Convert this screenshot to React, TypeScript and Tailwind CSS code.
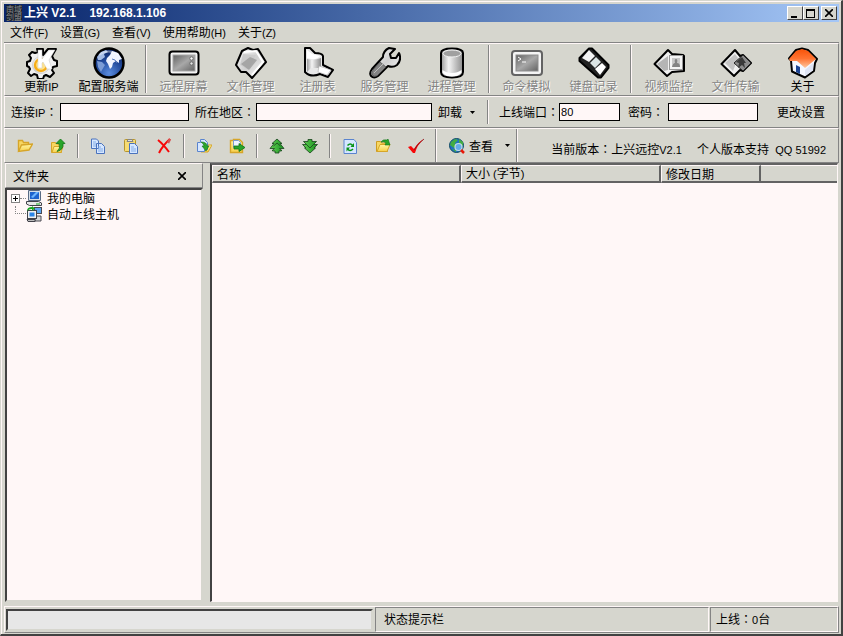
import type { ReactNode } from "react";

const outline = { stroke: "#000", strokeWidth: 2, strokeLinejoin: "round" as const };

/* ---------- large toolbar icons (32 x 32) ---------- */

const Defs = () => (
  <svg width="0" height="0" className="absolute" aria-hidden="true">
    <defs>
      <linearGradient id="silver" x1="0" y1="0" x2="1" y2="1">
        <stop offset="0" stopColor="#fff" />
        <stop offset="0.5" stopColor="#d0d0d0" />
        <stop offset="1" stopColor="#fff" />
      </linearGradient>
      <linearGradient id="screen" x1="0" y1="0" x2="1" y2="1">
        <stop offset="0" stopColor="#636363" />
        <stop offset="0.5" stopColor="#a8a8a8" />
        <stop offset="1" stopColor="#636363" />
      </linearGradient>
      <linearGradient id="tube" x1="0" y1="0" x2="1" y2="0">
        <stop offset="0" stopColor="#9c9c9c" />
        <stop offset="0.35" stopColor="#f4f4f4" />
        <stop offset="1" stopColor="#8c8c8c" />
      </linearGradient>
      <radialGradient id="ocean" cx="0.5" cy="0.85" r="0.75">
        <stop offset="0" stopColor="#5a8cde" />
        <stop offset="0.6" stopColor="#214a9c" />
        <stop offset="1" stopColor="#102a6b" />
      </radialGradient>
      <linearGradient id="roof" x1="0" y1="0" x2="0" y2="1">
        <stop offset="0" stopColor="#f75208" />
        <stop offset="0.5" stopColor="#ff7331" />
        <stop offset="1" stopColor="#ffc8a0" />
      </linearGradient>
      <linearGradient id="folder" x1="0" y1="0" x2="0" y2="1">
        <stop offset="0" stopColor="#fff7a5" />
        <stop offset="1" stopColor="#f7cf4a" />
      </linearGradient>
      <linearGradient id="leaf" x1="0" y1="0" x2="1" y2="0">
        <stop offset="0" stopColor="#63ce52" />
        <stop offset="1" stopColor="#189421" />
      </linearGradient>
    </defs>
  </svg>
);

const Icon32 = ({ children }: { children: ReactNode }) => (
  <svg width="32" height="32" viewBox="0 0 32 32" fill="none" aria-hidden="true">
    {children}
  </svg>
);

const GearIcon = () => (
  <Icon32>
    <path
      d="M11 2h6v6l5-6h8l-4 7 2 4 3 1v5l-4 1-1 3 2 3-4 4-4-2-2 1-1 3h-5l-1-4-3-1-3 2-3-3 2-4-1-2-2-1v-4l3-1 1-3-2-3 3-3 3 1 3-1z"
      fill="#f0f0f0"
      {...outline}
    />
    <circle cx="15" cy="18" r="8.500" fill="url(#silver)" stroke="#c0c0c0" strokeWidth="0.600" />
    <circle cx="15" cy="18" r="6" fill="#ffe38c" stroke="#f7ad18" strokeWidth="2.400" />
    <path d="M12 3h4v9l7-9h6l-6 10 3 9h-5l-4-7-1 1v5h-4z" fill="#fff" stroke="#c8c8c8" strokeWidth="0.500" />
  </Icon32>
);

const GlobeIcon = () => (
  <Icon32>
    <circle cx="16" cy="16" r="14.500" fill="url(#ocean)" {...outline} strokeWidth={2.5} />
    <path d="M4 10l4-5 5-2 2 2-4 2 1 3-4 3-3 0z" fill="#a5bde7" />
    <path d="M4 14l5 1 3 3-3 5-1 2-3-5z" fill="#7b9cd6" />
    <path d="M14 11l3-3 2-4 6 2 4 6-3 1 0 3-3-2-3 2-1 4-2 2-2-5-2-3z" fill="#f0f4ff" />
    <path d="M19 12l3 1 2 3" stroke="#5a7bbd" />
    <path d="M6 8q9-7 20 0" stroke="#fff" strokeOpacity="0.4" strokeWidth="2" />
  </Icon32>
);

const ScreenIcon = () => (
  <Icon32>
    <rect x="1.500" y="4.500" width="29" height="23" rx="3" fill="#f4f4f4" {...outline} />
    <rect x="5" y="8" width="22" height="16" fill="url(#screen)" stroke="#a5a5a5" />
    <circle cx="23.500" cy="11.500" r="1.700" fill="#fff" stroke="#666" />
    <circle cx="23.500" cy="16.500" r="1.700" fill="#e4e4e4" stroke="#666" />
  </Icon32>
);

const PapersIcon = () => (
  <Icon32>
    <path d="M7 4l6-3 5 2 5-1 8 13-14 16-6-6-5 0-5-7z" fill="url(#silver)" {...outline} />
    <path d="M8 7l13 1-8 15-8-5z" fill="#ccc" />
    <path d="M6 17l9-7 7 3-8 10z" fill="#949494" fillOpacity="0.7" />
    <path d="M9 5l12-1 7 11-11 13" stroke="#fff" strokeWidth="2" />
  </Icon32>
);

const RegistryIcon = () => (
  <Icon32>
    <path d="M3 1h5l5 5q7 0 8 3v9l10 5-5 7-8-3q-9 4-15-2z" fill="#e8e8e8" {...outline} />
    <path d="M5 12q6 2 14-1v10H9l-4 4z" fill="url(#tube)" />
    <path d="M5 3l5 4 8 2q-4 5-13 2z" fill="#fff" />
    <path d="M17 19l12 4-4 5-9-3z" fill="#fff" stroke="#aaa" strokeWidth="0.600" />
  </Icon32>
);

const WrenchIcon = () => (
  <Icon32>
    <path
      d="M14 10q0-6 6-9l6 1-5 5 1 4 5 0 3-5q3 7-2 12-4 3-9 1L9 29q-4 3-7 0-2-3 1-7z"
      fill="url(#silver)"
      {...outline}
    />
    <path d="M11 15l6 5-9 9q-3 1-5-1-1-2 1-5z" fill="#848484" stroke="#333" strokeWidth="0.600" />
    <path d="M5 26l9-9" stroke="#bbb" />
  </Icon32>
);

const CylinderIcon = () => (
  <Icon32>
    <path d="M5 6q0-4.500 11-4.500t11 4.500v19q0 5.500-11 5.500T5 25z" fill="url(#tube)" {...outline} />
    <ellipse cx="16" cy="6.500" rx="9" ry="3.500" fill="#a0a0a0" stroke="#f0f0f0" />
    <path d="M6.500 23q4 3 9.500 3t9.500-3v3q-4 3.500-9.500 3.500T6.500 26z" fill="#fff" />
  </Icon32>
);

const TerminalIcon = () => (
  <Icon32>
    <rect x="1" y="4" width="30" height="24" rx="3" fill="#f4f4f4" stroke="#636363" strokeWidth="2" />
    <rect x="5" y="8" width="22" height="16" fill="url(#screen)" stroke="#8c8c8c" />
    <path d="M7 10l3 2-3 2M11 15h4" stroke="#fff" />
  </Icon32>
);

const FilmIcon = () => (
  <Icon32>
    <path d="M11 1.500h3L30.500 18v3L23 30.500h-3L1.500 14v-3z" fill="#222" {...outline} />
    <path d="M11 3l6 6-6 6-7-4z" fill="#f4f4f4" />
    <path d="M18 10l5 5-6 6-5-5z" fill="#dbe4e4" />
    <path d="M24 16l4 4-6 8-5-6z" fill="#fff" />
  </Icon32>
);

const VideoIcon = () => (
  <Icon32>
    <path d="M1.500 17L15 3l4 4 11 1 1 1v15l-12 1-5 4z" fill="#f0f0f0" {...outline} />
    <path d="M4 17l11-8v14l-4 1z" fill="#b5b5b5" />
    <rect x="16.500" y="8.500" width="13" height="14" fill="#f4f4f4" stroke="#999" />
    <rect x="19" y="11" width="8" height="9" fill="#c8c8c8" />
    <path d="M19 20q1-4 3-4-1-4 1-4t1 4q3 0 3 4z" fill="#848484" />
  </Icon32>
);

const TransferIcon = () => (
  <Icon32>
    <path d="M1.500 17L15 3l5 6 3-1 8 8-8 8-3-1-6 6z" fill="#f0f0f0" {...outline} />
    <path d="M5 16l10-9 3 4-5 13z" fill="#c4c4c4" />
    <path d="M14 16l9-8 8 8-8 8z" fill="#8c8c8c" stroke="#222" />
    <path d="M22 10l4 6h-2l1 5-3-3-4 3 1-5-3-1z" fill="#3a3a3a" />
  </Icon32>
);

const HouseIcon = () => (
  <Icon32>
    <path d="M9 3l6-1.500 6 1.500 9 9-2 4-1 8-9 6.500-13-6-1-11-2-2z" fill="#f4f7ff" {...outline} />
    <path d="M9 4l6-2 6 2 8 8-11 9-8-7-7 0-1-2z" fill="url(#roof)" />
    <path d="M9 18l4 2v7l-4-2z" fill="#1c4494" />
    <path d="M18 23l8-7v7l-8 6z" fill="#dee4f4" />
  </Icon32>
);

/* ---------- small toolbar icons (16 x 16) ---------- */

const Icon16 = ({ children }: { children: ReactNode }) => (
  <svg width="16" height="16" viewBox="0 0 16 16" fill="none" aria-hidden="true">
    {children}
  </svg>
);

const FolderShape = () => (
  <>
    <path d="M1.500 13.500v-10h4l1 1.500h6v8.500z" fill="#f7d763" stroke="#ce9c21" />
    <path d="M2 13.500l3-7h10l-3 7z" fill="url(#folder)" stroke="#d6a529" />
  </>
);

const FolderOpenIcon = () => (
  <Icon16>
    <path d="M1.500 13V2.500h4l1 2h5V7" fill="#f7d763" stroke="#d6a529" strokeWidth="1.400" />
    <path d="M1.500 13.500l3-6.500 11-1-3.500 6z" fill="url(#folder)" stroke="#d6a529" strokeWidth="1.400" />
  </Icon16>
);

const FolderUpIcon = () => (
  <Icon16>
    <path d="M1.500 14.500v-10h4l1 1.500h5v8.500z" fill="#f7d763" stroke="#d6a529" />
    <path d="M2 14.500l2-6h9l-2 6z" fill="url(#folder)" stroke="#d6a529" />
    <path d="M7 13.500q4-3 2-8H6L10.500 1 15 5.500h-2q1 6-6 8z" fill="#29a529" stroke="#107318" strokeWidth="0.800" />
  </Icon16>
);

const CopyIcon = () => (
  <Icon16>
    <path d="M1.500 1h5l2 2v7.500h-7zM6.500 5.500h5l3 3v7h-8z" fill="#d6e7ff" stroke="#4a73bd" />
    <path d="M3 4h3M3 6h3M3 8h3M8 9h3M8 11h5M8 13h5" stroke="#84ade7" />
  </Icon16>
);

const PasteIcon = () => (
  <Icon16>
    <rect x="1.500" y="1.500" width="11" height="12" rx="1" fill="#f7dc73" stroke="#b5942c" />
    <path d="M4 3.500l1-2h4l1 2z" fill="#e0e0e0" stroke="#848484" />
    <path d="M6.500 5.500h5l3 3v7h-8z" fill="#d6e7ff" stroke="#4a73bd" />
    <path d="M8 9h3M8 11h5M8 13h5" stroke="#84ade7" />
  </Icon16>
);

const DeleteIcon = () => (
  <Icon16>
    <path d="M2 2q5 4 11 12M14 1Q7 7 3 15" stroke="#f70808" strokeWidth="2" />
    <path d="M14 1l-2 4" stroke="#d65252" strokeWidth="2.500" />
  </Icon16>
);

const CopyToIcon = () => (
  <Icon16>
    <path d="M5 14l3-7h8l-4 7z" fill="url(#folder)" stroke="#d6a529" />
    <path d="M1.500 4.500h3v-3h4l3 3v7h-3v2h-7z" fill="#d6e7ff" stroke="#5a84ce" />
    <path d="M5 4q6 0 6 4h2l-3 5-4-5h2q0-2-3-4z" fill="#29a529" stroke="#107318" strokeWidth="0.600" />
  </Icon16>
);

const MoveToIcon = () => (
  <Icon16>
    <path d="M1.500 14.500v-12h3v-1h6l3 3v10z" fill="url(#folder)" stroke="#d6a529" strokeWidth="1.400" />
    <path d="M4.500 2.500h5l2 2v5h-7z" fill="#eef4ff" stroke="#7b9cce" />
    <path d="M5 8h5V5.500l6 4-6 4V11H5z" fill="#29a529" stroke="#107318" strokeWidth="0.800" />
  </Icon16>
);

const ExpandUpIcon = () => (
  <Icon16>
    <path
      d="M8 1l5 4.500h-2l4 5h-4.500l2 1.500v1h-2.500v2H6v-2H3.500v-1l2-1.500H1l4-5H3z"
      fill="url(#leaf)"
      stroke="#18421c"
      strokeWidth="0.800"
    />
    <path d="M4.500 8L8 5l3.500 3" stroke="#18421c" strokeWidth="0.800" />
  </Icon16>
);

const ExpandDownIcon = () => (
  <Icon16>
    <path
      d="M6 1.500h4v2h4.500l-3 3h4L12 10h1.500L8 15l-5.500-5H4L.5 6.500h4l-3-3H6z"
      fill="url(#leaf)"
      stroke="#18421c"
      strokeWidth="0.800"
    />
    <path d="M4.500 6.500L8 10l3.500-3.500" stroke="#18421c" strokeWidth="0.800" />
  </Icon16>
);

const RefreshIcon = () => (
  <Icon16>
    <path d="M2 1.500h10l2.500 3v11H2z" fill="#d6e7ff" stroke="#5a84ce" />
    <path d="M5.500 7.500q3-3 5 0M11 11q-3 3-5.500 0" stroke="#089418" strokeWidth="1.600" />
    <path d="M12 5v4H8.500zM4.500 9.500H8l-3.500 4z" fill="#089418" />
  </Icon16>
);

const FolderOutIcon = () => (
  <Icon16>
    <FolderShape />
    <path d="M6 4q2-3 6-2l1-1 2 6h-5l1-2q-2-2-5-1z" fill="#29a529" stroke="#107318" strokeWidth="0.600" />
  </Icon16>
);

const CheckIcon = () => (
  <Icon16>
    <path d="M0 9l3-1 3 3Q10 4 16 1 9 7 7 15H5z" fill="#f70808" />
    <path d="M6 12Q10 5 16 1" stroke="#841018" strokeWidth="0.800" />
  </Icon16>
);

const GlobeSearchIcon = () => (
  <Icon16>
    <circle cx="7.500" cy="7.500" r="7" fill="#2173bd" stroke="#104a63" />
    <path d="M2 4l4-3 3 1-3 3 1 4-2 1-4-3zM10 1l4 3v4l-4-2zM3 11l4 1v2z" fill="#42ad42" />
    <circle cx="9.500" cy="9" r="3.500" fill="#63ade7" stroke="#c6dbe7" strokeWidth="1.200" />
    <path d="M12 12l3 3" stroke="#e71808" strokeWidth="2.500" />
  </Icon16>
);

const AppIcon = () => (
  <svg
    width="16"
    height="16"
    viewBox="0 0 16 16"
    className="overflow-visible bg-[#18202c] font-['Noto_Sans_CJK_SC',sans-serif] text-[8px]"
    fill="#8c8c8c"
    aria-hidden="true"
  >
    <text x="0 8 0 8" y="7 7 15 15">南域剑盟</text>
  </svg>
);

const ComputerIcon = () => (
  <Icon16>
    <path d="M2.500 0.500h11l1 1v9h-12z" fill="#d6dee7" stroke="#5a6b84" />
    <rect x="4" y="2" width="9" height="7" fill="#1c63ce" />
    <path d="M5 7l5-5h3l-6 6z" fill="#6bb5ff" />
    <path d="M.5 11.500h12l3 1.500v2.500h-12l-3-1.500z" fill="#e7e7e7" stroke="#42424a" />
    <path d="M10 14h4" stroke="#18a521" />
  </Icon16>
);

const HostsIcon = () => (
  <Icon16>
    <rect x="8.500" y="1.500" width="7" height="6" fill="#5aa5ef" stroke="#4a4a52" />
    <path d="M9 10h6v5H9z" fill="#d6d6d6" stroke="#4a4a52" />
    <rect x="1.500" y="4.500" width="9" height="8" fill="#f0f0f0" stroke="#42424a" />
    <rect x="3.500" y="6.500" width="5" height="4" fill="#2984e7" />
    <path d="M1 13.500h8v2H2z" fill="#bdbdbd" stroke="#42424a" />
    <path d="M1 5q0-4 5-4V0l3 2.500L6 5V3Q3 3 1 5z" fill="#18a521" />
  </Icon16>
);

/* ---------- shared pieces ---------- */

const Colon = () => <span className="font-['Noto_Sans_CJK_TC',sans-serif]">：</span>;

const Latin = ({ children }: { children: ReactNode }) => (
  <span className="font-['Liberation_Sans',sans-serif] text-[11px] whitespace-pre">{children}</span>
);

const Caret = () => (
  <svg width="5" height="3" viewBox="0 0 5 3" aria-hidden="true">
    <path d="M0 0h5L2.500 3z" fill="#000" />
  </svg>
);

const BigSeparator = () => (
  <div className="flex w-2 justify-center py-px">
    <div className="w-[2px] border-l border-[#848484] bg-[#fff7f7]" />
  </div>
);

const SmallSeparator = () => (
  <div className="flex w-[7px] justify-center">
    <div className="h-6 w-[2px] border-l border-[#848484] bg-[#fff7f7]" />
  </div>
);

type Tool = { label: ReactNode; icon: ReactNode; disabled?: boolean };

const toolGroups: Tool[][] = [
  [
    { label: <>更新<Latin>IP</Latin></>, icon: <GearIcon /> },
    { label: "配置服务端", icon: <GlobeIcon /> },
  ],
  [
    { label: "远程屏幕", icon: <ScreenIcon />, disabled: true },
    { label: "文件管理", icon: <PapersIcon />, disabled: true },
    { label: "注册表", icon: <RegistryIcon />, disabled: true },
    { label: "服务管理", icon: <WrenchIcon />, disabled: true },
    { label: "进程管理", icon: <CylinderIcon />, disabled: true },
  ],
  [
    { label: "命令模拟", icon: <TerminalIcon />, disabled: true },
    { label: "键盘记录", icon: <FilmIcon />, disabled: true },
  ],
  [
    { label: "视频监控", icon: <VideoIcon />, disabled: true },
    { label: "文件传输", icon: <TransferIcon />, disabled: true },
    { label: "关于", icon: <HouseIcon /> },
  ],
];

const actionGroups = [
  [
    { name: "打开", icon: <FolderOpenIcon /> },
    { name: "向上", icon: <FolderUpIcon /> },
  ],
  [
    { name: "复制", icon: <CopyIcon /> },
    { name: "粘贴", icon: <PasteIcon /> },
    { name: "删除", icon: <DeleteIcon /> },
  ],
  [
    { name: "复制到", icon: <CopyToIcon /> },
    { name: "移动到", icon: <MoveToIcon /> },
  ],
  [
    { name: "上传", icon: <ExpandUpIcon /> },
    { name: "下载", icon: <ExpandDownIcon /> },
  ],
  [
    { name: "刷新", icon: <RefreshIcon /> },
    { name: "导出", icon: <FolderOutIcon /> },
    { name: "确定", icon: <CheckIcon /> },
  ],
];

const menus = [
  { name: "文件", hotkey: "(F)" },
  { name: "设置", hotkey: "(G)" },
  { name: "查看", hotkey: "(V)" },
  { name: "使用帮助", hotkey: "(H)" },
  { name: "关于", hotkey: "(Z)" },
];

const captionButton =
  "flex h-[14px] w-4 items-center justify-center border border-t-white border-l-white border-r-[#424242] border-b-[#424242] bg-[#d6d6ce]";
const field =
  "h-[18px] min-w-0 border border-black bg-[#fff7f7] px-px font-['Liberation_Sans',sans-serif] text-[11px] outline-none";
const band =
  "border-t border-r border-b border-l border-t-[#fff7f7] border-r-[#848484] border-b-[#848484] border-l-[#fff7f7]";

const TitleBar = () => (
  <header className="flex h-[18px] items-center bg-linear-to-r from-[#08246b] to-[#a5c7f7] pr-[2px] pl-[2px]">
    <AppIcon />
    <h1 className="flex-1 pl-[2px] font-['Liberation_Sans','Noto_Sans_CJK_SC',sans-serif] text-[12px] leading-[18px] font-bold whitespace-pre text-white">
      上兴 V2.1{"    "}192.168.1.106
    </h1>
    <button aria-label="最小化" className={captionButton}>
      <svg width="10" height="9" viewBox="0 0 10 9"><path d="M1 7h6v2H1z" /></svg>
    </button>
    <button aria-label="最大化" className={captionButton}>
      <svg width="10" height="9" viewBox="0 0 10 9"><path d="M0 0h9v9H0zM1 2v6h7V2z" fillRule="evenodd" /></svg>
    </button>
    <button aria-label="关闭" className={`${captionButton} ml-[2px]`}>
      <svg width="8" height="8" viewBox="0 0 8 8"><path d="M0 0l8 8M8 0L0 8" stroke="#000" strokeWidth="1.600" /></svg>
    </button>
  </header>
);

const MainToolbar = () => (
  <div className={`flex h-[53px] px-[3px] pb-px ${band}`}>
    {toolGroups.map((group, i) => (
      <div key={i} className="flex">
        {i > 0 && <BigSeparator />}
        {group.map((tool, j) => (
          <button
            key={j}
            disabled={tool.disabled}
            className="flex w-[67px] flex-col items-center pt-[3px] whitespace-nowrap disabled:text-[#848484] disabled:text-shadow-[1px_1px_0_#fff]"
          >
            {tool.icon}
            <span className="leading-[14px]">{tool.label}</span>
          </button>
        ))}
      </div>
    ))}
  </div>
);

const ConnectionBar = () => (
  <div className={`flex h-8 items-center pr-[13px] pl-[6px] whitespace-nowrap ${band}`}>
    <label htmlFor="ip" className="w-[49px]">连接<Latin>IP</Latin><Colon /></label>
    <input id="ip" className={`${field} w-[129px]`} />
    <label htmlFor="region" className="ml-[6px] w-[61px]">所在地区<Colon /></label>
    <input id="region" className={`${field} w-[176px]`} />
    <button className="ml-[6px] flex items-center gap-2">
      卸载
      <Caret />
    </button>
    <div className="ml-3 h-6 w-[2px] border-l border-[#848484] bg-[#fff7f7]" />
    <label htmlFor="port" className="ml-[10px] w-[60px]">上线端口<Colon /></label>
    <input id="port" defaultValue="80" className={`${field} w-[61px]`} />
    <label htmlFor="password" className="ml-2 w-10">密码<Colon /></label>
    <input id="password" type="password" className={`${field} w-[90px]`} />
    <button className="ml-auto">更改设置</button>
  </div>
);

const ActionBar = () => (
  <div className={`flex h-[35px] items-stretch whitespace-nowrap ${band}`}>
    <div className="flex items-center border-r border-[#848484] pr-[3px] pl-[3px]">
      {actionGroups.map((group, i) => (
        <div key={i} className="flex items-center">
          {i > 0 && <SmallSeparator />}
          {group.map((action) => (
            <button key={action.name} aria-label={action.name} className="flex w-[33px] justify-center">
              {action.icon}
            </button>
          ))}
        </div>
      ))}
    </div>
    <button className="flex items-center border-r border-l border-r-[#848484] border-l-[#fff7f7] pr-[6px] pl-3">
      <GlobeSearchIcon />
      <span className="pr-3 pl-1">查看</span>
      <Caret />
    </button>
    <p className="flex-1 border-l border-[#fff7f7] pt-[12px] pr-3 text-right">
      当前版本<Colon />上兴远控<Latin>{"V2.1     "}</Latin>个人版本支持<Latin>{"  QQ 51992"}</Latin>
    </p>
  </div>
);

const FolderPanel = () => (
  <aside className="flex w-[198px] shrink-0 flex-col">
    <div className="flex h-[25px] items-center justify-between border border-t-[#fff7f7] border-r-[#848484] border-b-[#848484] border-l-[#fff7f7] pr-4 pl-[7px]">
      <h2>文件夹</h2>
      <button aria-label="关闭">
        <svg width="8" height="8" viewBox="0 0 8 8"><path d="M0 0l8 8M8 0L0 8" stroke="#000" strokeWidth="1.600" /></svg>
      </button>
    </div>
    <ul className="flex-1 border-2 border-t-[#424242] border-r-[#d6d6ce] border-b-[#d6d6ce] border-l-[#424242] bg-[#fff7f7] pl-1">
      <li className="flex h-4 items-center">
        <button
          aria-label="展开"
          className="flex size-[9px] items-center justify-center border border-[#848484] bg-white"
        >
          <svg width="5" height="5" viewBox="0 0 5 5"><path d="M0 2.500h5M2.500 0v5" stroke="#000" /></svg>
        </button>
        <span className="w-[6px] border-t border-dotted border-[#848484]" />
        <ComputerIcon />
        <span className="pl-[5px]">我的电脑</span>
      </li>
      <li className="flex h-4 items-center">
        <span className="mb-2 ml-1 h-2 w-[11px] border-b border-l border-dotted border-[#848484]" />
        <HostsIcon />
        <span className="pl-[5px]">自动上线主机</span>
      </li>
    </ul>
  </aside>
);

const headCell =
  "border-t border-r-2 border-b-2 border-l border-t-[#fff7f7] border-r-[#636363] border-b-[#636363] border-l-[#fff7f7] p-0 pl-1 text-left leading-[13px] font-normal";

const FileList = () => (
  <section className="min-w-0 flex-1 border border-t-2 border-l-2 border-t-[#636363] border-r-[#fff7f7] border-b-[#fff7f7] border-l-[#424242] bg-[#fff7f7]">
    <table className="w-full table-fixed border-separate border-spacing-0 bg-[#d6d6ce]">
      <thead>
        <tr>
          <th className={`${headCell} w-[249px]`}>名称</th>
          <th className={`${headCell} w-[200px]`}>大小<Latin>{" ("}</Latin>字节<Latin>)</Latin></th>
          <th className={`${headCell} w-[100px]`}>修改日期</th>
          <td className="border-t border-b-2 border-t-[#fff7f7] border-b-[#636363]" />
        </tr>
      </thead>
    </table>
  </section>
);

const StatusBar = () => (
  <footer className="mt-1 flex h-[27px] border-t border-r border-b border-l border-t-[#fff7f7] border-r-[#848484] border-b-[#848484] border-l-[#fff7f7] leading-[22px]">
    <div className="mt-[2px] mr-[2px] ml-px h-[22px] w-[367px] shrink-0 border-2 border-t-[#424242] border-r-[#d6d6ce] border-b-[#d6d6ce] border-l-[#424242] bg-[#e7e7e7]" />
    <p className="mr-px flex-1 border-t border-r border-b border-l border-t-[#848484] border-r-[#fff7f7] border-b-[#fff7f7] border-l-[#848484] pl-2">
      状态提示栏
    </p>
    <p className="w-[128px] border-t border-r border-b border-l border-t-[#848484] border-r-[#fff7f7] border-b-[#fff7f7] border-l-[#848484] pl-[5px]">
      上线<Colon /><Latin>0</Latin>台
    </p>
  </footer>
);

const App = () => (
  <div className="border-t border-r-2 border-b-2 border-l border-t-[#d6d6ce] border-r-[#424242] border-b-[#424242] border-l-[#d6d6ce] bg-[#d6d6ce] font-['Noto_Sans_CJK_SC',sans-serif] text-[12px] leading-4 text-black">
    <Defs />
    <div className="flex min-h-[calc(100vh-3px)] flex-col border-t border-l border-[#fff7f7] pt-[2px] pr-[2px] pb-px pl-[2px]">
      <TitleBar />
      <nav className="flex h-[21px] items-center border-b border-[#848484] leading-5">
        {menus.map((menu) => (
          <button key={menu.name} className="px-[6px] whitespace-nowrap">
            {menu.name}
            <Latin>{menu.hotkey}</Latin>
          </button>
        ))}
      </nav>
      <MainToolbar />
      <ConnectionBar />
      <ActionBar />
      <main className="flex flex-1 gap-[7px] pr-px pl-px">
        <FolderPanel />
        <FileList />
      </main>
      <StatusBar />
    </div>
  </div>
);

export default App;
